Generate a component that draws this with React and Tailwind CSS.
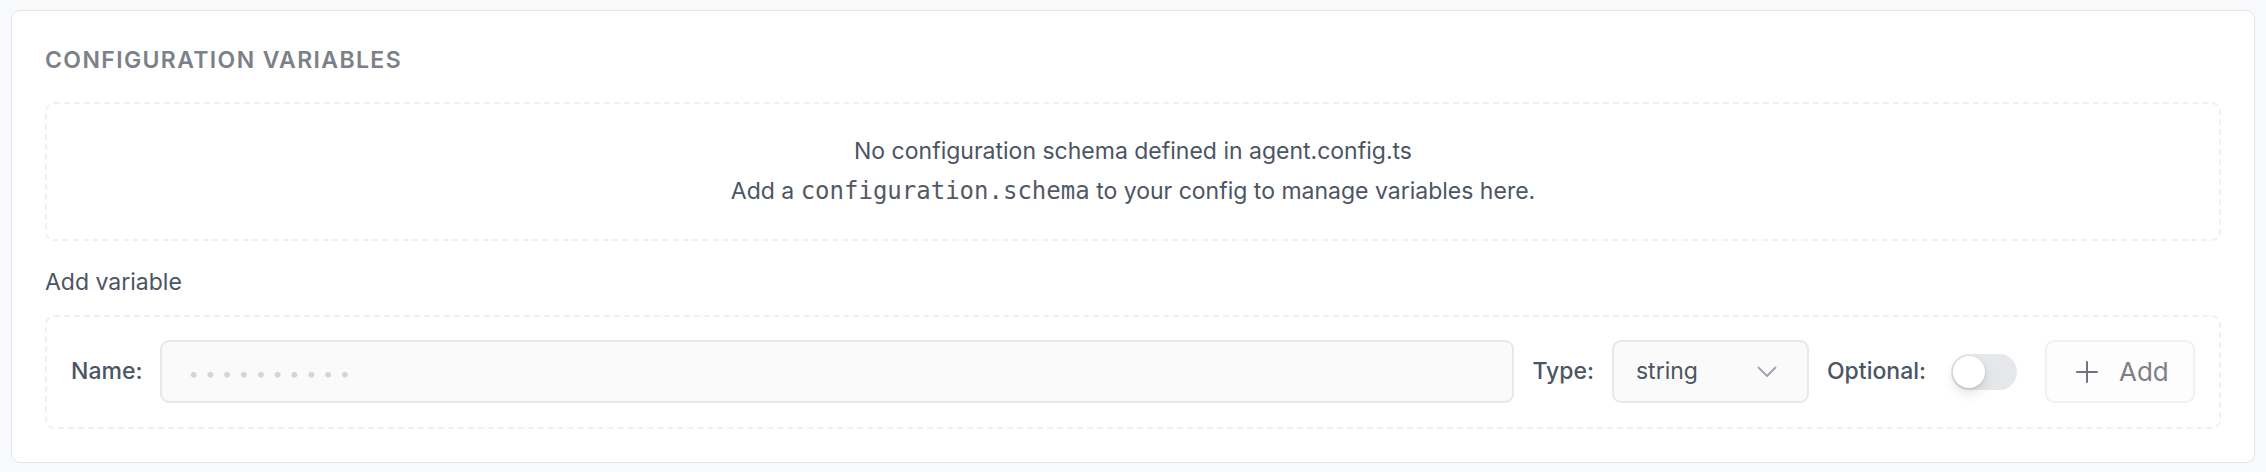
export default function App() {
  return (
    <div className="min-h-screen bg-[#f8f9fa] px-[11px] pt-[10px] pb-[11px] font-['Inter','Noto_Sans',sans-serif]">
      <div className="rounded-[9px] border border-[#e3e5e9] bg-white p-[33px]">
        <h2 className="text-[23px] leading-[32px] font-semibold tracking-[0.06em] uppercase text-[#7c8088]">
          Configuration Variables
        </h2>

        <div className="mt-[26px] rounded-[9px] border-2 border-dashed border-[#eef0f2] pt-[27px] pb-[28px] text-center text-[23px] leading-[40px] text-[#4b5563]">
          <p>No configuration schema defined in agent.config.ts</p>
          <p>
            Add a{" "}
            <code className="font-['DejaVu_Sans_Mono',monospace] text-[24px] text-[#535a66]">configuration.schema</code>{" "}
            to your config to manage variables here.
          </p>
        </div>

        <p className="mt-[24px] text-[23px] leading-[34px] text-[#4b5563]">Add variable</p>

        <div className="mt-[16px] flex items-center gap-[18px] rounded-[9px] border-2 border-dashed border-[#eef0f2] px-[24px] pt-[23px] pb-[24px]">
          <label className="text-[23px] font-medium text-[#4b5563]">Name:</label>
          <input
            type="text"
            placeholder="••••••••••"
            className="h-[63px] min-w-0 flex-1 rounded-[9px] border-2 border-[#e6e8eb] bg-[#fafafa] pl-[26px] text-[23px] text-[#374151] outline-none placeholder:text-[18px] placeholder:tracking-[6.7px] placeholder:text-[#d2d4d8]"
          />
          <label className="text-[23px] font-medium text-[#4b5563]">Type:</label>
          <div className="flex h-[63px] w-[197px] items-center justify-between rounded-[9px] border-2 border-[#e6e8eb] bg-[#fafafa] pl-[22px] pr-[30px]">
            <span className="text-[23px] text-[#4b5563]">string</span>
            <svg width="20" height="12" viewBox="0 0 20 12" fill="none">
              <polyline points="1.5,1.5 10,10 18.5,1.5" stroke="#9ca3af" strokeWidth="1.8" strokeLinecap="round" strokeLinejoin="round" />
            </svg>
          </div>
          <label className="text-[23px] font-medium text-[#4b5563]">Optional:</label>
          <button className="ml-[7px] flex h-[36px] w-[66px] items-center rounded-full bg-[#e5e7eb] p-[2px]">
            <span className="block h-[32px] w-[32px] rounded-full bg-white shadow-[0_6px_12px_rgba(0,0,0,0.10),0_1px_3px_rgba(0,0,0,0.12)]" />
          </button>
          <button className="ml-[10px] flex h-[63px] w-[150px] items-center rounded-[9px] border-2 border-[#eff1f3] bg-[#fdfdfd] pl-[29px] text-[26px] text-[#7c8086]">
            <svg width="22" height="22" viewBox="0 0 22 22" fill="none" className="mr-[21px]">
              <line x1="11" y1="1" x2="11" y2="21" stroke="#70757c" strokeWidth="2" strokeLinecap="round" />
              <line x1="1" y1="11" x2="21" y2="11" stroke="#70757c" strokeWidth="2" strokeLinecap="round" />
            </svg>
            Add
          </button>
        </div>
      </div>
    </div>
  );
}
